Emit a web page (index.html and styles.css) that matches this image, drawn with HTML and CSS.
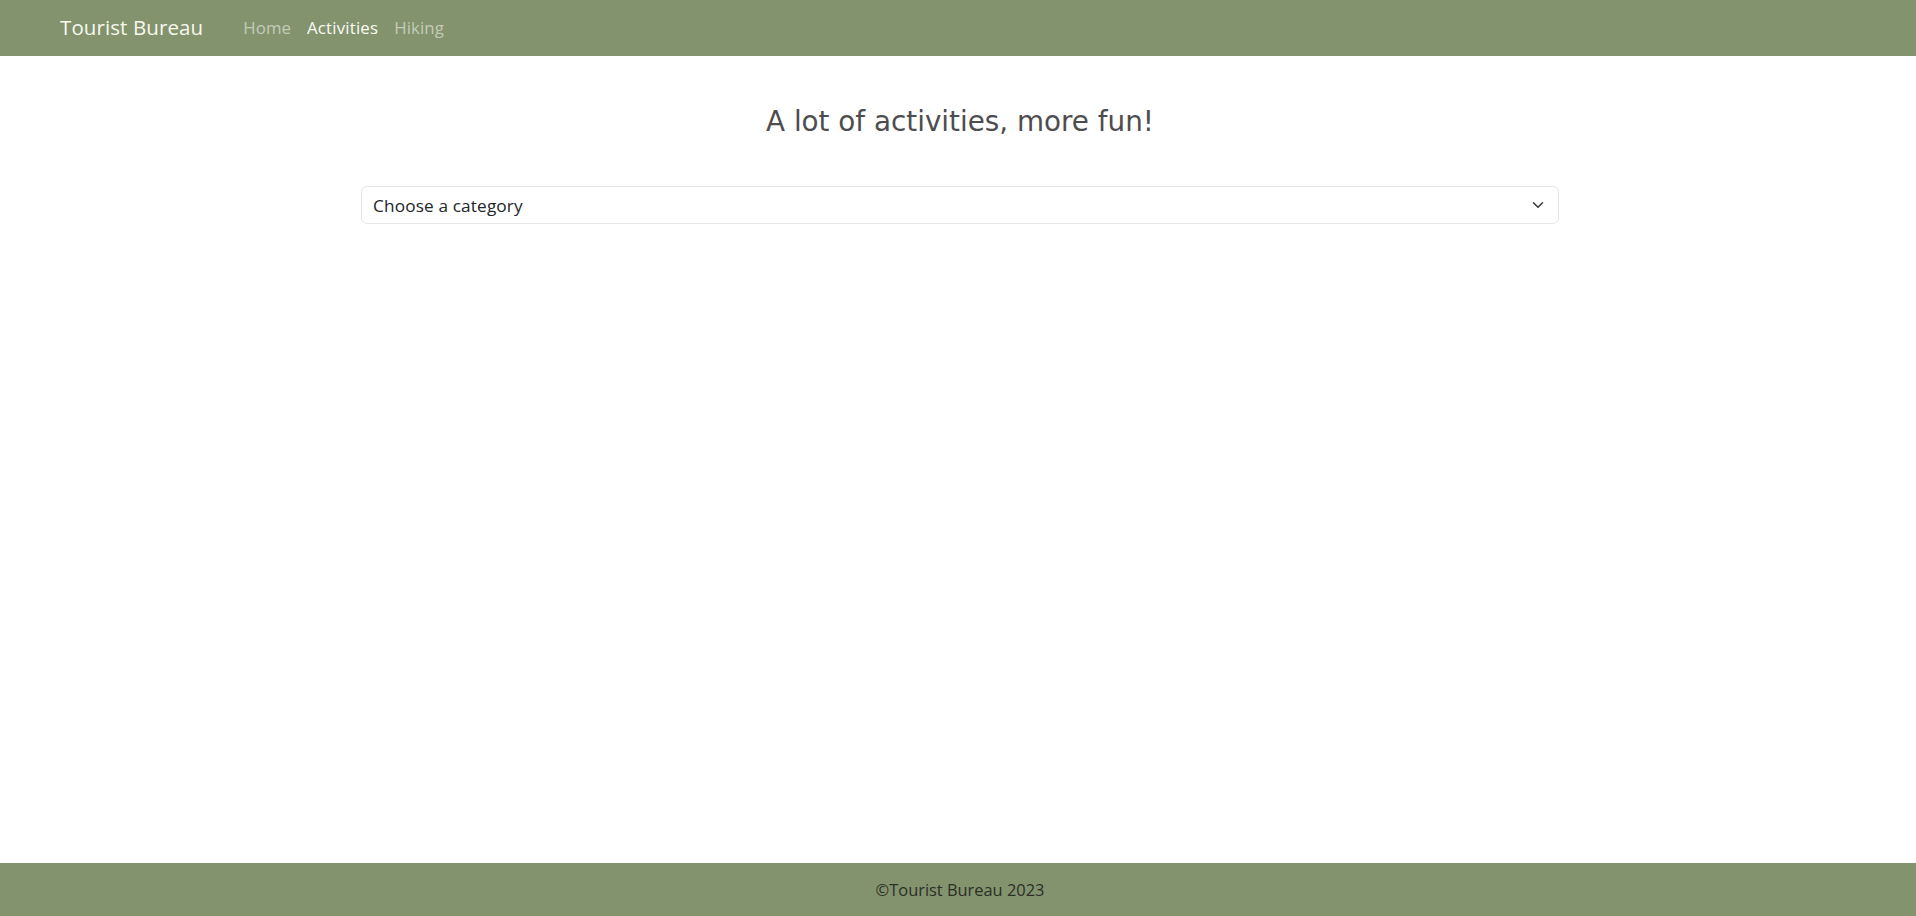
FILE: index.html
```html
<!DOCTYPE html>
<html lang="en">
<head>
<meta charset="utf-8">
<title>Activities - Tourist Bureau</title>
<link rel="stylesheet" href="styles.css">
</head>
<body>
<header class="navbar">
  <a class="brand" href="#">Tourist Bureau</a>
  <nav class="nav">
    <a class="nav-link" href="#">Home</a>
    <a class="nav-link active" href="#">Activities</a>
    <a class="nav-link" href="#">Hiking</a>
  </nav>
</header>
<main class="main">
  <h1 class="title">A lot of activities, more fun!</h1>
  <div class="select-wrap">
    <div class="select">
      <span class="select-text">Choose a category</span>
      <svg class="chevron" width="16" height="16" viewBox="0 0 16 16" fill="none" stroke="#343a40" stroke-width="2" stroke-linecap="round" stroke-linejoin="round"><path d="m2 5 6 6 6-6"/></svg>
    </div>
  </div>
</main>
<footer class="footer">©Tourist Bureau 2023</footer>
</body>
</html>
```

FILE: styles.css
```css
* { box-sizing: border-box; }
html, body { margin: 0; padding: 0; }
body {
  min-height: 100vh;
  display: flex;
  flex-direction: column;
  font-family: "Open Sans", "Liberation Sans", sans-serif;
  color: #212529;
  background: #fff;
}
.navbar {
  height: 56px;
  background: #83936e;
  display: flex;
  align-items: center;
  padding-left: 60px;
  padding-bottom: 2px;
}
.brand {
  color: #f8f8ee;
  text-decoration: none;
  font-size: 20.5px;
  margin-right: 32px;
  letter-spacing: 0.1px;
}
.nav { display: flex; }
.nav-link {
  color: #c3cbb8;
  text-decoration: none;
  font-size: 16.8px;
  letter-spacing: 0.1px;
  padding: 0 8px;
}
.nav-link.active { color: #fbfbf5; font-weight: 500; letter-spacing: 0.2px; }
.main {
  flex: 1;
  display: flex;
  flex-direction: column;
  align-items: center;
  padding-left: 4px;
}
.title {
  margin: 49px 0 0;
  font-family: "DejaVu Sans", sans-serif;
  font-weight: 400;
  font-size: 27.8px;
  color: #4d4d4f;
  line-height: 1.2;
}
.select-wrap { width: 1198px; margin-top: 48px; }
.select {
  height: 38px;
  border: 1px solid #e6e6e6;
  border-radius: 6px;
  display: flex;
  align-items: center;
  justify-content: space-between;
  padding: 0 12px 0 11px;
}
.select-text { font-size: 17.2px; letter-spacing: 0.15px; color: #212529; }
.chevron { width: 12px; height: 12px; margin-right: 2px; }
.footer {
  height: 53px;
  background: #83936e;
  display: flex;
  align-items: center;
  justify-content: center;
  padding-left: 4px;
  font-size: 16.4px;
  color: #2b2f26;
}
```
